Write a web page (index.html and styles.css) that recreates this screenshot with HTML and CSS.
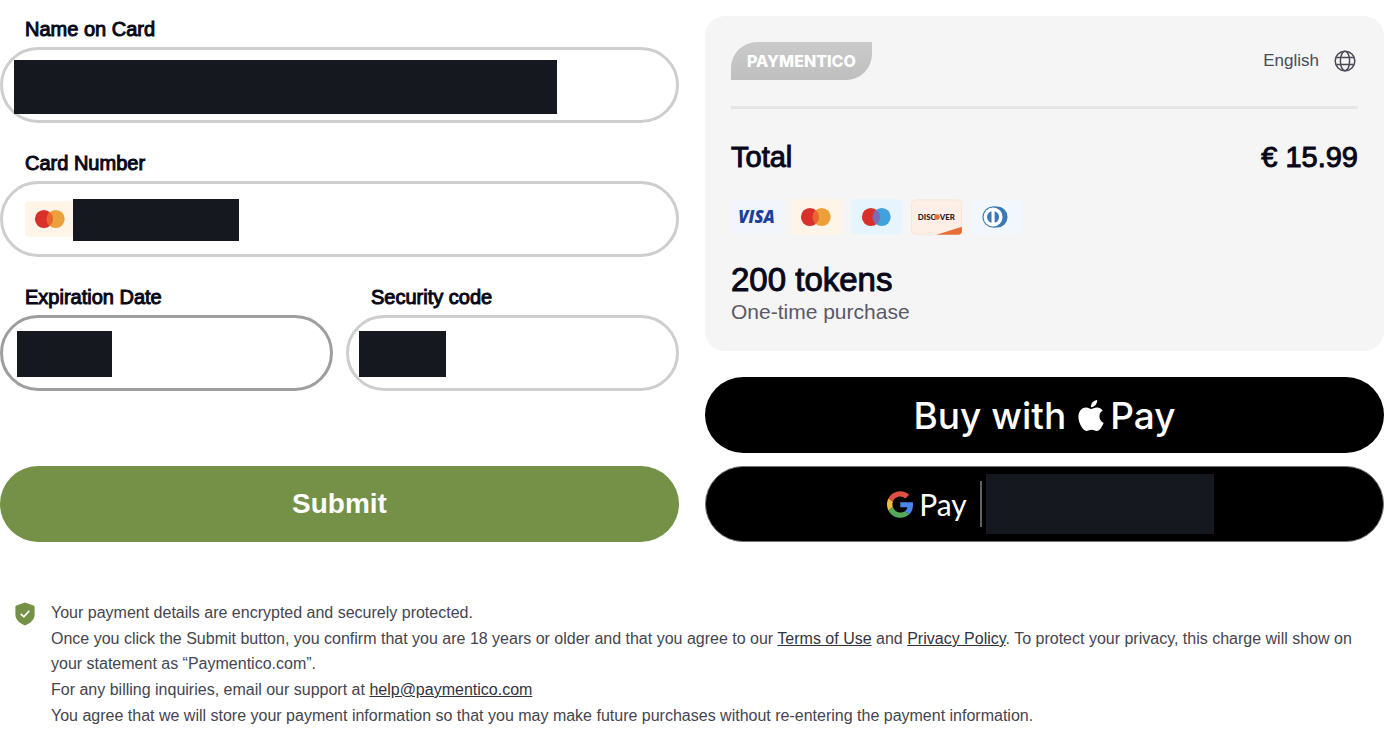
FILE: index.html
```html
<!DOCTYPE html>
<html lang="en">
<head>
    <meta charset="UTF-8">
    <meta name="viewport" content="width=device-width, initial-scale=1.0">
    <title>Paymentico - Checkout</title>
    <link rel="stylesheet" href="styles.css">
</head>
<body>
    <div class="checkout">
        <form class="card-form" action="#" method="post">
            <div class="field">
                <label for="name">Name on Card</label>
                <div class="control">
                    <input type="text" id="name" name="name">
                    <span class="mask mask-name"></span>
                </div>
            </div>
            <div class="field">
                <label for="number">Card Number</label>
                <div class="control">
                    <input type="text" id="number" name="number">
                    <svg class="pay-icon number-icon" viewBox="0 0 52 36">
                        <rect width="52" height="36" rx="4" fill="#fef5e8"/>
                        <circle cx="19.3" cy="18" r="9.2" fill="#d9302b"/>
                        <circle cx="31.3" cy="18" r="9.2" fill="#eca03c"/>
                        <path d="M25.3 11A9.2 9.2 0 0 1 25.3 25A9.2 9.2 0 0 1 25.3 11Z" fill="#ea6430"/>
                    </svg>
                    <span class="mask mask-number"></span>
                </div>
            </div>
            <div class="field-row">
                <div class="field">
                    <label for="expiry">Expiration Date</label>
                    <div class="control">
                        <input type="text" id="expiry" name="expiry" class="active">
                        <span class="mask mask-expiry"></span>
                    </div>
                </div>
                <div class="field">
                    <label for="code">Security code</label>
                    <div class="control">
                        <input type="text" id="code" name="code">
                        <span class="mask mask-code"></span>
                    </div>
                </div>
            </div>
            <button type="submit" class="btn btn-submit">Submit</button>
        </form>

        <div class="side">
            <div class="summary">
                <div class="summary-header">
                    <div class="logo">PAYMENTICO</div>
                    <button type="button" class="language">
                        English
                        <svg width="22" height="22" viewBox="0 0 22 22" fill="none" stroke="#4b4b57" stroke-width="1.5">
                            <circle cx="11" cy="11" r="9.8"/>
                            <ellipse cx="11" cy="11" rx="4.6" ry="9.8"/>
                            <path d="M2.4 7.6h17.2M2.4 14.4h17.2"/>
                        </svg>
                    </button>
                </div>
                <div class="total">
                    <span>Total</span>
                    <span>€ 15.99</span>
                </div>
                <div class="pay-icons">
                    <svg class="pay-icon" viewBox="0 0 52 36">
                        <rect width="52" height="36" rx="4" fill="#f3f5fd"/>
                        <text x="26" y="24" text-anchor="middle" class="visa-text">VISA</text>
                    </svg>
                    <svg class="pay-icon" viewBox="0 0 52 36">
                        <rect width="52" height="36" rx="4" fill="#fef5e8"/>
                        <circle cx="19.3" cy="18" r="9.2" fill="#d9302b"/>
                        <circle cx="31.3" cy="18" r="9.2" fill="#eca03c"/>
                        <path d="M25.3 11A9.2 9.2 0 0 1 25.3 25A9.2 9.2 0 0 1 25.3 11Z" fill="#ea6430"/>
                    </svg>
                    <svg class="pay-icon" viewBox="0 0 52 36">
                        <rect width="52" height="36" rx="4" fill="#e6f5fd"/>
                        <circle cx="20.3" cy="18" r="9.2" fill="#d9302b"/>
                        <circle cx="31.3" cy="18" r="9.2" fill="#42a0dc"/>
                        <path d="M25.8 10.6A9.2 9.2 0 0 1 25.8 25.4A9.2 9.2 0 0 1 25.8 10.6Z" fill="#7b6cb4"/>
                    </svg>
                    <svg class="pay-icon" viewBox="0 0 52 36">
                        <rect x=".5" y=".5" width="51" height="35" rx="4" fill="#feefe6" stroke="#f8e4d9"/>
                        <path d="M26 36L52 28V32a4 4 0 0 1-4 4Z" fill="#e96f38"/>
                        <text x="7" y="21" class="discover-text">DISC</text>
                        <circle cx="26.5" cy="18" r="2.8" fill="#e96f38"/>
                        <text x="29.3" y="21" class="discover-text">VER</text>
                    </svg>
                    <svg class="pay-icon" viewBox="0 0 52 36">
                        <rect width="52" height="36" rx="4" fill="#f1f7fd"/>
                        <path d="M22 7.2H26.500A10.800 10.800 0 0 1 26.500 28.800H22Z" fill="#3b79b5"/>
                        <circle cx="22.500" cy="18" r="10.800" fill="#3b79b5"/>
                        <circle cx="22.500" cy="18" r="9.700" fill="#fff"/>
                        <circle cx="22.500" cy="18" r="6.200" fill="#3b79b5"/>
                        <path d="M20.900 10h3.200v16h-3.200z" fill="#fff"/>
                    </svg>
                </div>
                <div class="product">200 tokens</div>
                <div class="product-note">One-time purchase</div>
            </div>

            <button type="button" class="btn btn-apple">
                <span>Buy with</span>
                <svg width="26" height="31" viewBox="2 0 20 24" fill="#fff">
                    <path d="M12.152 6.896c-.948 0-2.415-1.078-3.96-1.04-2.04.027-3.91 1.183-4.961 3.014-2.117 3.675-.546 9.103 1.519 12.09 1.013 1.454 2.208 3.09 3.792 3.039 1.52-.065 2.09-.987 3.935-.987 1.831 0 2.35.987 3.96.948 1.637-.026 2.676-1.48 3.676-2.948 1.156-1.688 1.636-3.325 1.662-3.415-.039-.013-3.182-1.221-3.22-4.857-.026-3.04 2.48-4.494 2.597-4.559-1.429-2.09-3.623-2.324-4.39-2.376-2-.156-3.675 1.09-4.61 1.09zM15.53 3.83c.843-1.012 1.4-2.427 1.245-3.83-1.207.052-2.662.805-3.532 1.818-.78.896-1.454 2.338-1.273 3.714 1.338.104 2.715-.688 3.559-1.701"/>
                </svg>
                <span>Pay</span>
            </button>

            <button type="button" class="btn btn-google">
                <svg width="26" height="27" viewBox="0 0 47 48">
                    <path fill="#dd5144" d="M24 9.5c3.54 0 6.71 1.22 9.21 3.6l6.85-6.85C35.9 2.38 30.47 0 24 0 14.62 0 6.51 5.38 2.56 13.22l7.98 6.19C12.43 13.72 17.74 9.5 24 9.5z"/>
                    <path fill="#4c85ec" d="M46.98 24.55c0-1.57-.15-3.09-.38-4.55H24v9.02h12.94c-.58 2.96-2.26 5.48-4.78 7.18l7.73 6c4.51-4.18 7.09-10.36 7.09-17.65z"/>
                    <path fill="#f3bd42" d="M10.53 28.59c-.48-1.45-.76-2.99-.76-4.59s.27-3.14.76-4.59l-7.98-6.19C.92 16.46 0 20.12 0 24c0 3.88.92 7.54 2.56 10.78l7.97-6.19z"/>
                    <path fill="#55a95b" d="M24 48c6.48 0 11.93-2.13 15.89-5.81l-7.73-6c-2.15 1.45-4.92 2.3-8.16 2.3-6.26 0-11.57-4.22-13.47-9.91l-7.98 6.19C6.51 42.62 14.62 48 24 48z"/>
                </svg>
                <span class="google-pay">Pay</span>
                <span class="divider"></span>
                <span class="google-card"></span>
            </button>
        </div>
    </div>

    <footer class="legal">
        <svg class="shield" width="20" height="24" viewBox="0 0 20 24">
            <path d="M10 .5L18.6 3.6Q19.6 4 19.6 5.2V12.5C19.6 17.6 15.5 21.3 10 23.5C4.5 21.3.4 17.6.4 12.5V5.2Q.4 4 1.4 3.6Z" fill="#749147"/>
            <path d="M5.8 11.8l3 3 5.5-6" fill="none" stroke="#fff" stroke-width="1.7"/>
        </svg>
        <div class="legal-text">
            <p>Your payment details are encrypted and securely protected.</p>
            <p>Once you click the Submit button, you confirm that you are 18 years or older and that you agree to our <a href="#">Terms of Use</a> and <a href="#">Privacy Policy</a>. To protect your privacy, this charge will show on your statement as “Paymentico.com”.</p>
            <p>For any billing inquiries, email our support at <a href="mailto:help@paymentico.com">help@paymentico.com</a></p>
            <p>You agree that we will store your payment information so that you may make future purchases without re-entering the payment information.</p>
        </div>
    </footer>
</body>
</html>
```

FILE: styles.css
```css
* {
    box-sizing: border-box;
}
body {
    font-family: "Liberation Sans", Arial, sans-serif;
    margin: 0;
    padding: 16px 16px 16px 0;
    background-color: #fff;
    color: #080818;
}
.checkout {
    display: grid;
    grid-template-columns: 1fr 1fr;
    gap: 26px;
}

/* Card form */
.card-form {
    display: flex;
    flex-direction: column;
    gap: 27px;
}
.field {
    flex: 1;
    min-width: 0;
}
.card-form > .field {
    flex: none;
}
.field-row {
    display: flex;
    gap: 13px;
}
label {
    display: block;
    font-size: 20px;
    line-height: 26px;
    padding-left: 25px;
    margin-bottom: 5px;
    -webkit-text-stroke: 1px #080818;
}
.control {
    position: relative;
}
input[type="text"] {
    display: block;
    width: 100%;
    height: 76px;
    padding: 0 22px;
    border: 3px solid #cecece;
    border-radius: 38px;
    background: #fff;
    font-family: inherit;
    font-size: 21px;
    outline: none;
}
input[type="text"].active {
    border-color: #9e9e9e;
}
.mask {
    position: absolute;
    background: #15181f;
}
.mask-name {
    left: 14px;
    top: 13px;
    width: 543px;
    height: 54px;
}
.number-icon {
    position: absolute;
    left: 25px;
    top: 20px;
}
.mask-number {
    left: 73px;
    top: 18px;
    width: 166px;
    height: 42px;
}
.mask-expiry,
.mask-code {
    top: 16px;
    height: 46px;
}
.mask-expiry {
    left: 17px;
    width: 95px;
}
.mask-code {
    left: 13px;
    width: 87px;
}

/* Buttons */
.btn {
    display: flex;
    align-items: center;
    justify-content: center;
    width: 100%;
    height: 76px;
    border: none;
    border-radius: 38px;
    color: #fff;
    cursor: pointer;
}
.btn-submit {
    margin-top: auto;
    background: #749147;
    font-family: inherit;
    font-size: 28px;
    font-weight: bold;
}
.btn-apple {
    margin-top: 26px;
    background: #000;
    font-family: Inter, sans-serif;
    font-size: 37px;
    font-weight: 500;
}
.btn-apple svg {
    margin: 0 6px 0 12px;
}
.btn-google {
    margin-top: 13px;
    padding-left: 18px;
    background: #000;
    border: 1px solid #747775;
}
.google-pay {
    margin-left: 6px;
    font-family: Lato, sans-serif;
    font-size: 30px;
}
.divider {
    width: 2px;
    height: 46px;
    margin: 0 4px 0 13px;
    background: #5f6368;
}
.google-card {
    width: 228px;
    height: 60px;
    background: #15181f;
}

/* Order summary */
.summary {
    padding: 26px;
    border-radius: 20px;
    background: #f5f5f5;
}
.summary-header {
    display: flex;
    justify-content: space-between;
    align-items: center;
    padding-bottom: 26px;
    border-bottom: 3px solid #e5e5e5;
}
.logo {
    padding: 0 16px;
    border-radius: 26px 0;
    background: linear-gradient(#cacaca, #bfbfbf);
    color: #fff;
    font-family: Inter, sans-serif;
    font-size: 16px;
    font-weight: 800;
    line-height: 38px;
}
.language {
    display: flex;
    align-items: center;
    gap: 15px;
    padding: 0 2px 0 0;
    border: none;
    background: none;
    color: #4b4b57;
    font-family: inherit;
    font-size: 17px;
    cursor: pointer;
}
.total {
    display: flex;
    justify-content: space-between;
    margin-top: 30px;
    font-size: 29px;
    line-height: 36px;
    -webkit-text-stroke: 1px #080818;
}
.pay-icons {
    display: flex;
    gap: 9px;
    margin-top: 24px;
}
.pay-icon {
    width: 51px;
    height: 36px;
}
.visa-text {
    font-family: "Open Sans", sans-serif;
    font-size: 17px;
    font-style: italic;
    font-weight: 800;
    fill: #1c3f9c;
}
.discover-text {
    font-family: Lato, sans-serif;
    font-size: 8px;
    font-weight: 900;
    fill: #222;
}
.product {
    margin-top: 26px;
    font-size: 33px;
    line-height: 38px;
    -webkit-text-stroke: 1px #080818;
}
.product-note {
    color: #5a5a66;
    font-size: 21px;
    line-height: 26px;
}

/* Legal text */
.legal {
    display: flex;
    gap: 16px;
    margin-top: 58px;
    padding-left: 15px;
    color: #45454f;
}
.shield {
    flex: none;
    margin-top: 2px;
}
.legal-text {
    display: flex;
    flex-direction: column;
    gap: 1px;
    font-size: 16px;
    line-height: 25px;
}
.legal-text p {
    margin: 0;
}
.legal-text a {
    color: #33333d;
}

@media screen and (max-width: 800px) {
    .checkout {
        grid-template-columns: 1fr;
    }
}
```
